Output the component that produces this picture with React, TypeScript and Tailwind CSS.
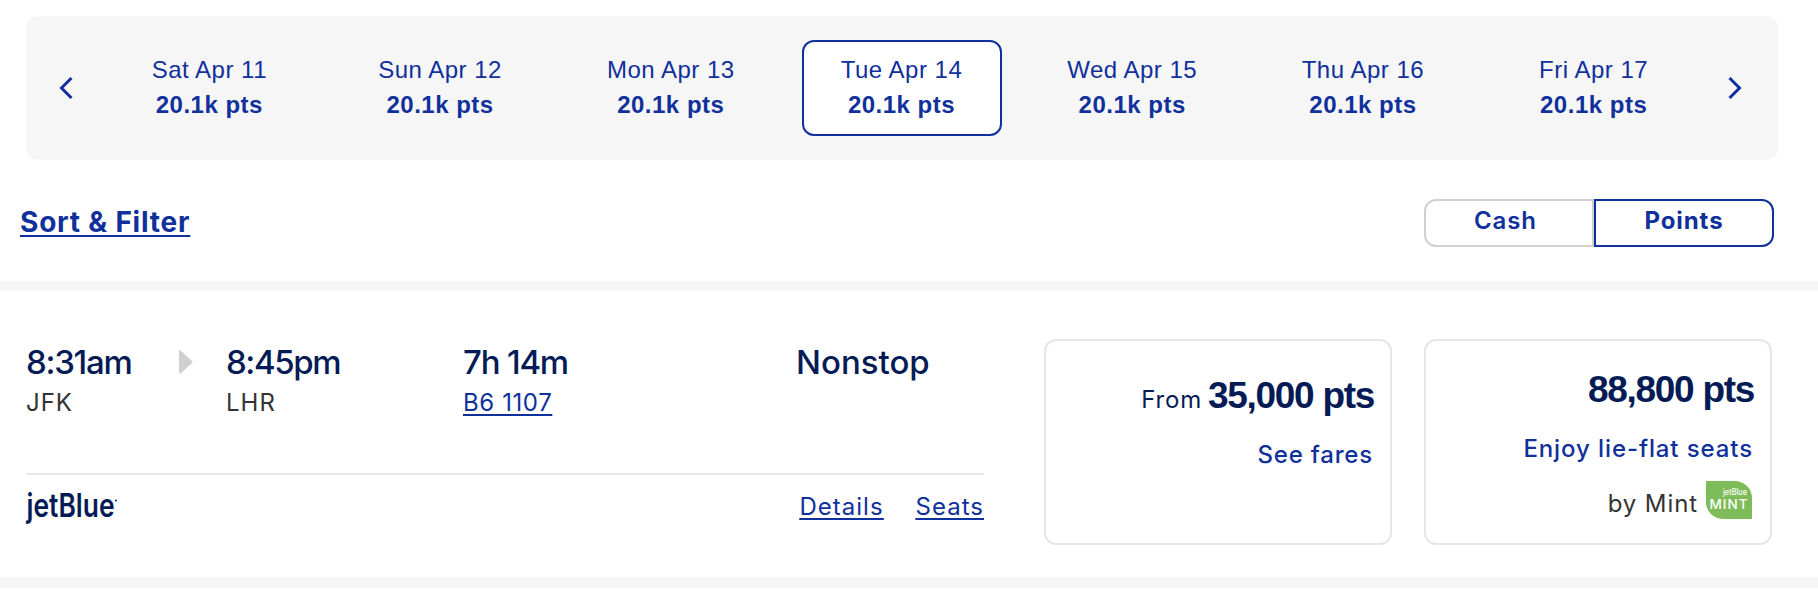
import clsx from "clsx";

interface DayFare {
  date: string;
  points: string;
}

const days: DayFare[] = [
  { date: "Sat Apr 11", points: "20.1k pts" },
  { date: "Sun Apr 12", points: "20.1k pts" },
  { date: "Mon Apr 13", points: "20.1k pts" },
  { date: "Tue Apr 14", points: "20.1k pts" },
  { date: "Wed Apr 15", points: "20.1k pts" },
  { date: "Thu Apr 16", points: "20.1k pts" },
  { date: "Fri Apr 17", points: "20.1k pts" },
];

const selectedDate = "Tue Apr 14";

function Chevron({ flip = false }: { flip?: boolean }) {
  return (
    <svg
      viewBox="0 0 14 22"
      fill="none"
      stroke="currentColor"
      strokeWidth="3"
      className={clsx("h-[22px] w-[14px] shrink-0", flip && "rotate-180")}
    >
      <path d="m12.5 1-10 10 10 10" />
    </svg>
  );
}

function DateBar() {
  return (
    <nav className="ml-[26px] flex h-36 w-[1752px] items-center rounded-xl bg-[#f6f6f6] font-['Liberation_Sans',sans-serif] text-[#10309b]">
      <button className="flex w-[68px] justify-start pl-[33px]">
        <Chevron />
      </button>
      <div className="grid w-[1615px] grid-cols-7">
        {days.map((day) => (
          <button
            key={day.date}
            className={clsx(
              "mr-[15px] ml-4 flex h-24 flex-col items-center justify-center rounded-xl border-2 pr-px pb-0.5 text-2xl leading-[35px]",
              day.date === selectedDate ? "border-[#10309b] bg-white" : "border-transparent",
            )}
          >
            <span className="tracking-[0.5px]">{day.date}</span>
            <span className="font-bold tracking-[0.5px]">{day.points}</span>
          </button>
        ))}
      </div>
      <button className="flex flex-1 justify-start pl-[19px]">
        <Chevron flip />
      </button>
    </nav>
  );
}

function Toolbar() {
  return (
    <div className="mt-[39px] flex h-12 items-center justify-between pr-11 pl-5 text-[#10309b]">
      <a className="pb-0.5 text-[28px] leading-9 font-bold tracking-[0.8px] underline decoration-2 underline-offset-[3px]">
        Sort &amp; Filter
      </a>
      <div className="flex h-12 text-2xl leading-[30px]">
        <button className="w-[170px] rounded-l-xl border-2 border-[#d0d0d0] pr-[7px] pb-1 font-semibold tracking-[0.9px]">
          Cash
        </button>
        <button className="w-[180px] rounded-r-xl border-2 border-[#10309b] pb-1 font-bold tracking-[0.9px]">
          Points
        </button>
      </div>
    </div>
  );
}

function MintBadge() {
  return (
    <svg viewBox="0 0 46 38" className="h-[38px] w-[46px]">
      <path d="M0 0h28c10 0 18 7 18 17v21H18C8 38 0 31 0 21Z" fill="#7ebc59" />
      <text
        x="17"
        y="13.5"
        fontSize="8.5"
        fill="#fff"
        textLength="24"
        lengthAdjust="spacingAndGlyphs"
        className="font-medium"
      >
        jetBlue
      </text>
      <text x="3.5" y="28" fontSize="13.5" fill="#fff" textLength="38" className="font-medium">
        MINT
      </text>
    </svg>
  );
}

function FlightSummary() {
  return (
    <section className="w-[958px]">
      <div className="flex h-[136px] border-b-2 border-[#e6e6e6] pt-[3px] text-[33px] leading-[41px] font-medium text-[#051b55]">
        <div className="w-[153px]">
          <p className="tracking-[-1.3px]">8:31am</p>
          <p className="text-2xl leading-10 font-normal tracking-[1px] text-[#333]">JFK</p>
        </div>
        <svg viewBox="0 0 14 24" className="mt-2 mr-[33px] h-6 w-[14px] fill-[#d0d0d0]">
          <path d="M0 1.5Q0-.5 2 .7l11 10.3q1 1 0 2L2 23.3q-2 1.2-2-.8Z" />
        </svg>
        <div className="w-[237px]">
          <p className="tracking-[-1.4px]">8:45pm</p>
          <p className="text-2xl leading-10 font-normal tracking-[1px] text-[#333]">LHR</p>
        </div>
        <div className="w-[333px]">
          <p className="tracking-[-1.2px]">7h 14m</p>
          <a className="block w-fit text-2xl leading-10 font-normal tracking-[0.6px] text-[#10309b] underline decoration-2 underline-offset-[3px]">
            B6 1107
          </a>
        </div>
        <p>Nonstop</p>
      </div>
      <div className="flex items-start justify-between pt-3">
        <svg viewBox="0 0 92 44" className="h-11 w-[92px] overflow-visible fill-[#051b55]">
          <text
            x="0.5"
            y="29.5"
            fontSize="33"
            textLength="88"
            lengthAdjust="spacingAndGlyphs"
            className="font-semibold"
          >
            jetBlue
          </text>
          <circle cx="90" cy="13.5" r="1" />
        </svg>
        <div className="flex gap-8 text-2xl leading-10 tracking-[1px] text-[#10309b] underline decoration-2 underline-offset-[3px]">
          <a>Details</a>
          <a>Seats</a>
        </div>
      </div>
    </section>
  );
}

function Price({ amount }: { amount: string }) {
  return (
    <b className="-mr-0.5 font-['Liberation_Sans',sans-serif] text-[37px] leading-[44px] tracking-[-1.3px]">
      {amount} pts
    </b>
  );
}

function FareCards() {
  return (
    <div className="flex gap-8 text-right text-2xl text-[#051b55]">
      <button className="flex h-[206px] w-[348px] flex-col items-end rounded-xl border-2 border-[#e6e6e6] pt-[33px] pr-[18px]">
        <span className="flex items-baseline gap-1.5">
          <span className="leading-8 tracking-[0.8px]">From</span>
          <Price amount="35,000" />
        </span>
        <span className="mt-[21px] -mr-px leading-8 font-medium tracking-[0.8px] text-[#10309b]">
          See fares
        </span>
      </button>
      <button className="flex h-[206px] w-[348px] flex-col items-end rounded-xl border-2 border-[#e6e6e6] pt-[27px] pr-[18px]">
        <Price amount="88,800" />
        <span className="mt-[21px] -mr-px leading-8 font-medium tracking-[0.9px] text-[#10309b]">
          Enjoy lie-flat seats
        </span>
        <span className="mt-4 flex items-start gap-2 text-[#333]">
          <span className="pt-[7px] leading-8 tracking-[0.9px]">by Mint</span>
          <MintBadge />
        </span>
      </button>
    </div>
  );
}

export default function App() {
  return (
    <main className="h-[590px] w-[1818px] overflow-hidden bg-white pt-4 font-['Inter',sans-serif]">
      <DateBar />
      <Toolbar />
      <div className="mt-[34px] h-[10px] bg-[#f6f6f6]" />
      <div className="flex h-[286px] gap-[60px] pt-12 pl-[26px]">
        <FlightSummary />
        <FareCards />
      </div>
      <div className="h-[11px] bg-[#f6f6f6]" />
    </main>
  );
}
